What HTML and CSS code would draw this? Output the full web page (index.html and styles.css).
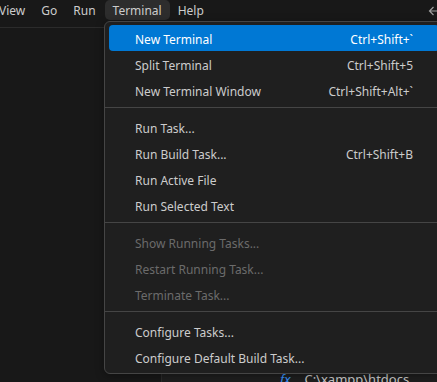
FILE: index.html
```html
<!DOCTYPE html>
<html lang="en">
<head>
    <meta charset="UTF-8">
    <title>Terminal menu</title>
    <link rel="stylesheet" href="styles.css">
</head>
<body>
    <div class="titlebar">
        <ul class="menubar">
            <li class="menubar-item">View</li>
            <li class="menubar-item">Go</li>
            <li class="menubar-item">Run</li>
            <li class="menubar-item open">Terminal</li>
            <li class="menubar-item">Help</li>
        </ul>
        <svg class="nav-back" width="14" height="14" viewBox="0 0 14 14">
            <path d="M14 7H2.5M6.5 3L2.5 7L6.5 11" fill="none" stroke="#9d9d9d" stroke-width="1.2"/>
        </svg>
    </div>

    <div class="workbench">
        <div class="sidebar"></div>
        <div class="editor">
            <div class="editor-line">
                <span class="fx">fx</span>
                <span class="path">C:\xampp\htdocs</span>
            </div>
        </div>
    </div>

    <!-- dropdown for the Terminal menu -->
    <div class="menu">
        <div class="menu-item active"><span>New Terminal</span><span class="keys">Ctrl+Shift+`</span></div>
        <div class="menu-item"><span>Split Terminal</span><span class="keys">Ctrl+Shift+5</span></div>
        <div class="menu-item"><span>New Terminal Window</span><span class="keys">Ctrl+Shift+Alt+`</span></div>
        <div class="separator"></div>
        <div class="menu-item"><span>Run Task...</span></div>
        <div class="menu-item"><span>Run Build Task...</span><span class="keys">Ctrl+Shift+B</span></div>
        <div class="menu-item"><span>Run Active File</span></div>
        <div class="menu-item"><span>Run Selected Text</span></div>
        <div class="separator"></div>
        <div class="menu-item disabled"><span>Show Running Tasks...</span></div>
        <div class="menu-item disabled"><span>Restart Running Task...</span></div>
        <div class="menu-item disabled"><span>Terminate Task...</span></div>
        <div class="separator"></div>
        <div class="menu-item"><span>Configure Tasks...</span></div>
        <div class="menu-item"><span>Configure Default Build Task...</span></div>
    </div>
</body>
</html>
```

FILE: styles.css
```css
* {
    margin: 0;
    padding: 0;
    box-sizing: border-box;
}

body {
    font-family: "Noto Sans", "Open Sans", sans-serif;
    font-size: 12px;
    color: #cccccc;
    background: #181818;
    width: 437px;
    height: 382px;
    overflow: hidden;
    position: relative;
}

.titlebar {
    height: 28px;
    border-bottom: 1px solid #2b2b2b;
    display: flex;
    justify-content: space-between;
}

.menubar {
    list-style: none;
    display: flex;
    margin-left: -9px;
}

.menubar-item {
    height: 20px;
    line-height: 22px;
    padding: 0 8px;
    border-radius: 5px;
    color: #cccccc;
}

.menubar-item.open {
    background: #2d2d2d;
    margin-left: 1px;
}

.nav-back {
    margin-top: 4px;
    margin-right: -4px;
}

.workbench {
    display: flex;
    height: 354px;
}

.sidebar {
    width: 161px;
    background: #181818;
}

.editor {
    flex: 1;
    background: #1f1f1f;
    border-left: 1px solid #2b2b2b;
    padding: 342px 0 0 118px;
}

.editor-line {
    display: flex;
    gap: 14px;
    font-size: 13px;
    line-height: 18px;
}

.fx {
    color: #3794ff;
    font-style: italic;
}

.menu {
    position: absolute;
    left: 104px;
    top: 21px;
    width: 340px;
    padding: 3px 4px;
    background: #1f1f1f;
    border: 1px solid #454545;
    border-radius: 6px;
    box-shadow: 0 2px 8px rgba(0, 0, 0, 0.36);
}

.menu-item {
    height: 26px;
    display: flex;
    align-items: center;
    justify-content: space-between;
    padding: 2px 26px 0 26px;
    border-radius: 4px;
    color: #cccccc;
}

.menu-item.active {
    background: #0078d4;
    color: #ffffff;
}

.menu-item.disabled {
    color: #6b6b6b;
}

.keys {
    color: inherit;
}

.separator {
    height: 1px;
    margin: 4px -4px 6px;
    background: #454545;
}
```
